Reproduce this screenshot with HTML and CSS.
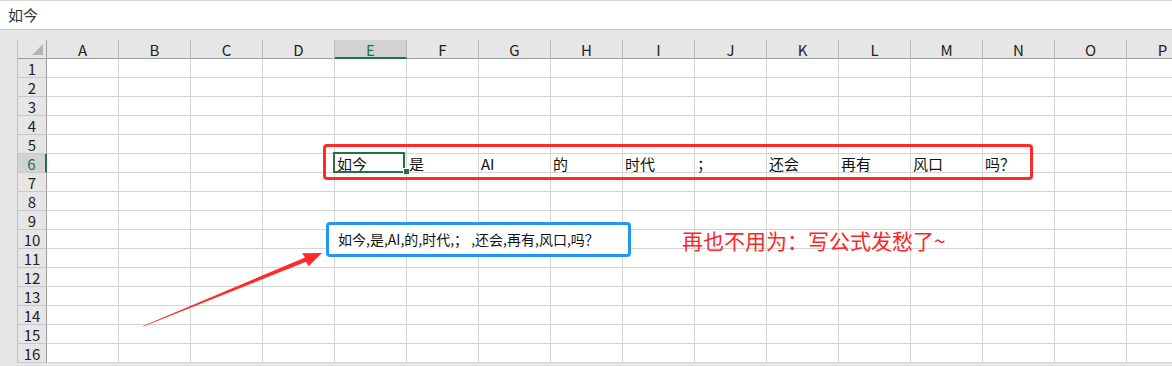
FILE: index.html
```html
<!DOCTYPE html>
<html>
  <head>
    <title>Sheet1</title>
    <link rel="stylesheet" href="styles.css">
  </head>
  <body>
    <div class="formula-bar">如今</div>

    <div class="sheet">
      <div id="grid" class="grid"></div>
    </div>

    <div class="mark mark-red"></div>
    <div class="mark mark-blue">如今,是,AI,的,时代,；&nbsp;,还会,再有,风口,吗？</div>
    <div class="note">再也不用为：写公式发愁了~</div>

    <svg class="arrow" width="1172" height="366" viewBox="0 0 1172 366">
      <polygon fill="#ff2b2b" points="143,326 305,257.4 302,253.2 322,253 308.6,266.2 306,261.8 143.4,326.6" />
    </svg>

    <script>
      var cols = "ABCDEFGHIJKLMNOP".split("");
      var data = {
        E6: "如今", F6: "是", G6: "AI", H6: "的", I6: "时代",
        J6: "；", K6: "还会", L6: "再有", M6: "风口", N6: "吗？"
      };
      var activeCol = "E";
      var activeRow = 6;

      var grid = document.getElementById("grid");

      var corner = document.createElement("div");
      corner.className = "corner";
      corner.innerHTML = "<span></span>";
      grid.appendChild(corner);

      for (var c = 0; c < cols.length; c++) {
        var head = document.createElement("div");
        head.className = "col-head" + (cols[c] == activeCol ? " on" : "");
        head.textContent = cols[c];
        grid.appendChild(head);
      }

      for (var r = 1; r <= 16; r++) {
        var rowHead = document.createElement("div");
        rowHead.className = "row-head" + (r == activeRow ? " on" : "");
        rowHead.textContent = r;
        grid.appendChild(rowHead);

        for (var c = 0; c < cols.length; c++) {
          var key = cols[c] + r;
          var cell = document.createElement("div");
          cell.className = "cell";
          if (cols[c] == activeCol && r == activeRow) {
            cell.className += " active";
          }
          cell.textContent = data[key] || "";
          grid.appendChild(cell);
        }
      }
    </script>
  </body>
</html>
```

FILE: styles.css
```css
html,
body {
  margin: 0;
}

body {
  position: relative;
  width: 1172px;
  height: 366px;
  overflow: hidden;
  background-color: #e6e6e6;
  font-family: "Noto Sans CJK SC", "Noto Sans", sans-serif;
  color: #222;
}

.formula-bar {
  height: 28px;
  padding-left: 8px;
  background-color: #fff;
  border-top: 1px solid #d9d9d9;
  border-bottom: 1px solid #c6c6c6;
  font-size: 15px;
  line-height: 28px;
  color: #333;
}

.sheet {
  padding: 10px 0 0 17px;
}

.grid {
  display: grid;
  grid-template-columns: 30px repeat(16, 72px);
  grid-template-rows: 19px;
  grid-auto-rows: 19px;
}

.grid > div {
  box-sizing: border-box;
  white-space: nowrap;
}

.corner {
  display: flex;
  justify-content: flex-end;
  align-items: flex-end;
  padding: 0 3px 3px 0;
  background-color: #e6e6e6;
  border-left: 1px solid #c0c0c0;
  border-right: 1px solid #9e9e9e;
  border-bottom: 1px solid #9e9e9e;
}

.corner span {
  width: 0;
  height: 0;
  border-left: 11px solid transparent;
  border-bottom: 11px solid #b4b4b4;
}

.col-head {
  background-color: #e6e6e6;
  border-right: 1px solid #bcbcbc;
  border-bottom: 1px solid #9e9e9e;
  text-align: center;
  font-size: 15px;
  line-height: 19px;
  color: #222;
}

.col-head.on {
  background-color: #d2d2d2;
  border-bottom: 2px solid #217346;
  color: #217346;
}

.row-head {
  background-color: #e6e6e6;
  border-left: 1px solid #c0c0c0;
  border-right: 1px solid #9e9e9e;
  border-bottom: 1px solid #c8c8c8;
  text-align: center;
  font-size: 15px;
  line-height: 19px;
  color: #222;
}

.row-head.on {
  background-color: #d2d2d2;
  border-right: 2px solid #217346;
  color: #217346;
}

.cell {
  padding-left: 2px;
  background-color: #fff;
  border-right: 1px solid #d4d4d4;
  border-bottom: 1px solid #d4d4d4;
  font-size: 15px;
  line-height: 19px;
  color: #111;
}

.cell.active {
  position: relative;
}

.cell.active::before {
  content: "";
  position: absolute;
  left: -2px;
  top: -2px;
  right: 1px;
  bottom: -1px;
  border: 2px solid #217346;
}

.cell.active::after {
  content: "";
  position: absolute;
  right: -3px;
  bottom: -2px;
  width: 5px;
  height: 5px;
  background-color: #217346;
  border: 1px solid #fff;
  border-width: 1px 0 0 1px;
}

/* annotations drawn over the sheet */
.mark {
  position: absolute;
  box-sizing: border-box;
  border-radius: 4px;
}

.mark-red {
  left: 323px;
  top: 144px;
  width: 710px;
  height: 36px;
  border: 3px solid #ff2b2b;
}

.mark-blue {
  left: 326px;
  top: 222px;
  width: 305px;
  height: 35px;
  padding-left: 9px;
  border: 3px solid #2196f3;
  background-color: #fff;
  font-size: 14px;
  line-height: 29px;
  color: #111;
  white-space: nowrap;
}

.note {
  position: absolute;
  left: 682px;
  top: 226px;
  font-size: 21px;
  line-height: 28px;
  color: #ff2424;
  white-space: nowrap;
}

.arrow {
  position: absolute;
  left: 0;
  top: 0;
  pointer-events: none;
}
```
